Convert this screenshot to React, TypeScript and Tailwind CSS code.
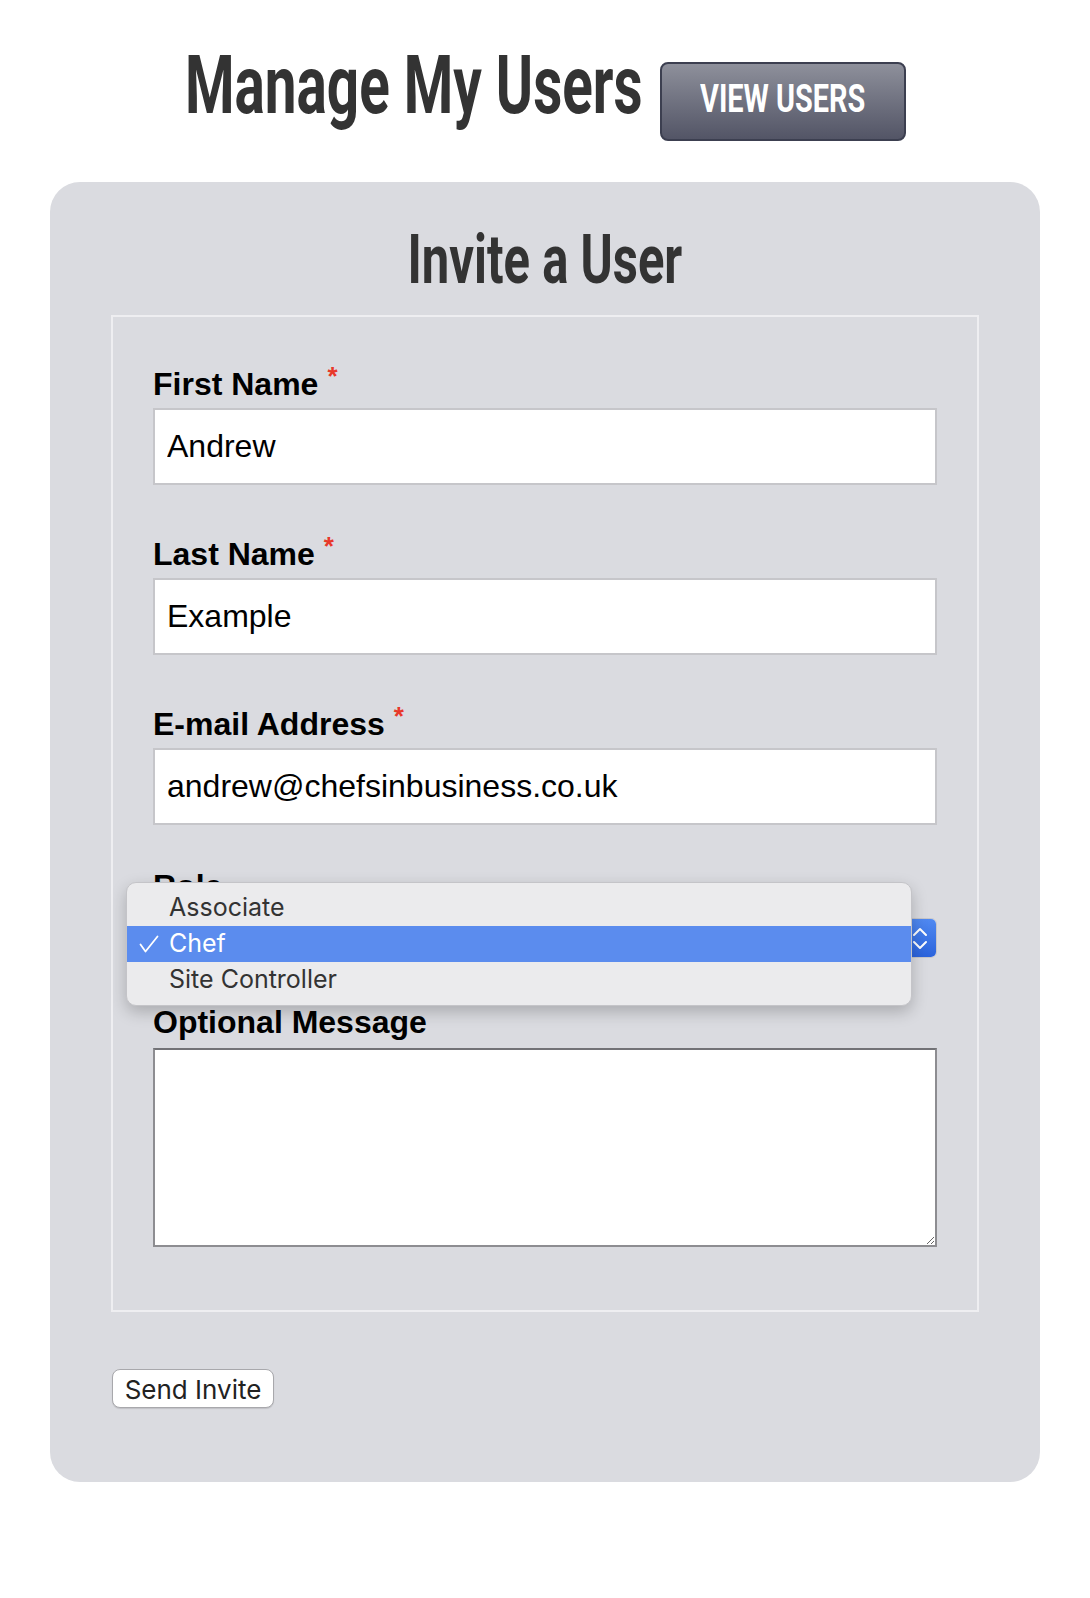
import React from "react";

const Req = () => (
  <span className="relative -top-[10px] ml-[9px] text-[26px] leading-none text-[#e8382a]">*</span>
);

interface FieldProps {
  label: string;
  value: string;
  className?: string;
}

const TextField: React.FC<FieldProps> = ({ label, value, className }) => (
  <div className={className}>
    <label className="mb-[5px] block h-[39px] pt-[2px] text-[32px] font-bold leading-[37px] text-black">
      {label}
      <Req />
    </label>
    <input
      type="text"
      defaultValue={value}
      className="block h-[77px] w-full border-2 border-[#c6c6ca] bg-white px-[12px] text-[32px] text-black outline-none"
    />
  </div>
);

const CheckMark = () => (
  <svg width="20" height="18" viewBox="0 0 20 18" fill="none">
    <path d="M1.5 9.5 L6.5 16.5 L18.5 1.5" stroke="white" strokeWidth="1.8" strokeLinecap="round" strokeLinejoin="round" />
  </svg>
);

const roles = ["Associate", "Chef", "Site Controller"];

export default function App() {
  return (
    <div className="min-h-[1598px] bg-white font-['Liberation_Sans',Arial,sans-serif]">
      {/* header */}
      <div className="flex justify-center pt-[44px]">
        <h1 className="w-[456px] shrink-0 font-['Roboto',sans-serif] text-[82px] font-bold leading-none text-[#333]">
          <span className="inline-block origin-left scale-x-[0.69] whitespace-nowrap">Manage My Users</span>
        </h1>
        <button className="ml-[19px] mt-[18px] flex h-[79px] w-[246px] shrink-0 items-center justify-center rounded-[8px] border-2 border-[#3c3f50] bg-linear-to-b from-[#8e909b] to-[#535566] pb-[5px]">
          <span className="inline-block origin-center scale-x-[0.74] whitespace-nowrap font-['Roboto',sans-serif] text-[39px] font-bold leading-none text-white">
            VIEW USERS
          </span>
        </button>
      </div>

      {/* card */}
      <div className="mx-auto mt-[41px] w-[990px] rounded-[30px] bg-[#dadbe0] px-[61px] pt-[44px] pb-[74px]">
        <h2 className="mb-[21px] text-center font-['Roboto',sans-serif] text-[68px] font-bold leading-none text-[#333]">
          <span className="inline-block origin-center scale-x-[0.72] whitespace-nowrap">Invite a User</span>
        </h2>

        <div className="border-2 border-[#eeeef1] px-[40px] pt-[47px] pb-[63px]">
          <TextField label="First Name" value="Andrew" />
          <TextField label="Last Name" value="Example" className="mt-[49px]" />
          <TextField label="E-mail Address" value="andrew@chefsinbusiness.co.uk" className="mt-[49px]" />

          {/* role select with open menu */}
          <div className="relative mt-[43px]">
            <label className="block h-[37px] text-[32px] font-bold leading-[37px] text-black">Role</label>
            <div className="mt-[13px] flex h-[40px] w-full overflow-hidden rounded-[6px] border border-[#c6c6ca] bg-white">
              <div className="flex-1" />
              <div className="flex w-[32px] items-center justify-center bg-linear-to-b from-[#5089f1] to-[#2b63dc]">
                <svg width="32" height="40" viewBox="0 0 32 40" fill="none">
                  <path d="M10 17 L16 11 L22 17" stroke="white" strokeWidth="2" strokeLinecap="round" strokeLinejoin="round" />
                  <path d="M10 24 L16 30 L22 24" stroke="white" strokeWidth="2" strokeLinecap="round" strokeLinejoin="round" />
                </svg>
              </div>
            </div>

            <div className="absolute left-[-27px] top-[14px] z-10 w-[786px] rounded-[10px] border border-[#c4c4c8] bg-[#ebebed] py-[7px] font-['Inter',sans-serif] text-[25px] text-[#333] shadow-[0_6px_16px_rgba(0,0,0,0.22)]">
              {roles.map((r) => (
                <div
                  key={r}
                  className={
                    r === "Chef"
                      ? "flex h-[36px] items-center bg-[#5b8cee] pl-[12px] text-white"
                      : "flex h-[36px] items-center pl-[12px]"
                  }
                >
                  <span className="flex w-[30px] items-center">{r === "Chef" && <CheckMark />}</span>
                  {r}
                </div>
              ))}
            </div>
          </div>

          <div className="mt-[44px]">
            <label className="mb-[7px] block h-[39px] pt-[2px] text-[32px] font-bold leading-[37px] text-black">Optional Message</label>
            <textarea className="block h-[199px] w-full resize-y border-2 border-[#8d8d91] border-t-[#727276] bg-white outline-none" />
          </div>
        </div>

        <button className="ml-[1px] mt-[57px] h-[39px] w-[162px] rounded-[8px] border border-[#a8a8ac] bg-white font-['Inter',sans-serif] text-[26px] text-[#222] shadow-[0_1px_1px_rgba(0,0,0,0.12)]">
          Send Invite
        </button>
      </div>
    </div>
  );
}
